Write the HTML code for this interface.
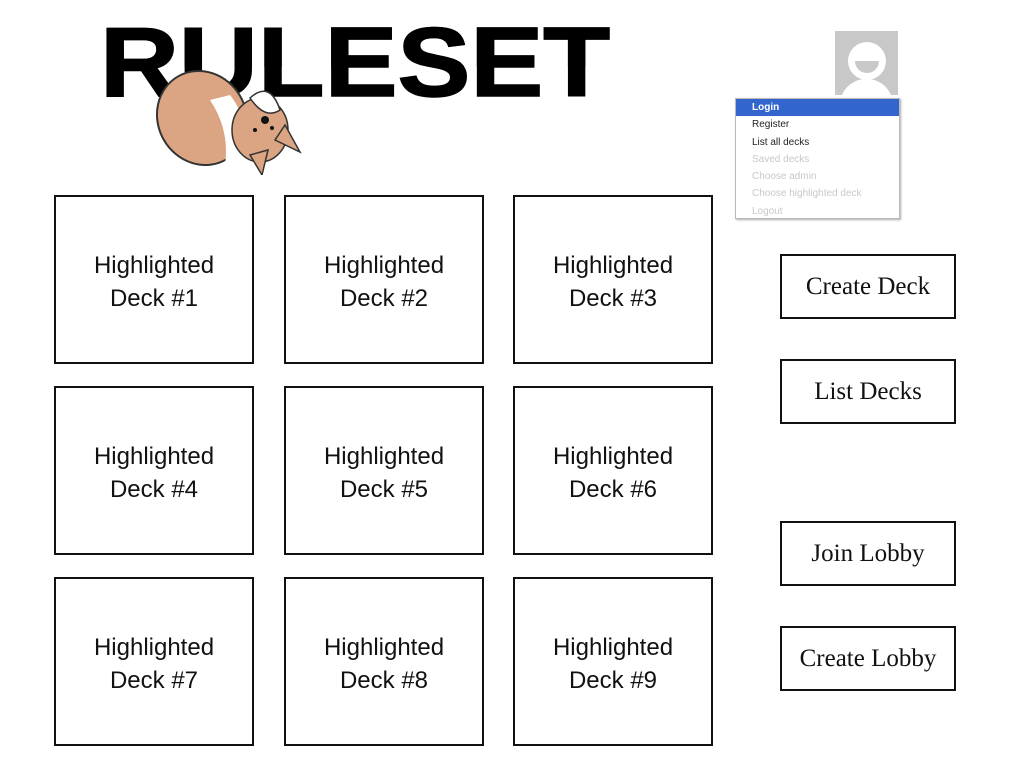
<!DOCTYPE html>
<html><head><style>
body{margin:0;width:1025px;height:770px;background:#fff;position:relative;overflow:hidden;font-family:"Liberation Sans",sans-serif}
.logo{position:absolute;left:100px;top:13px;font-weight:bold;font-size:98px;letter-spacing:0;color:#000;-webkit-text-stroke:1.5px #000;line-height:1;white-space:nowrap;transform:scaleX(1.115);transform-origin:left top}
.card{position:absolute;width:196px;height:161px;padding-top:4px;border:2px solid #111;display:flex;align-items:center;justify-content:center;text-align:center;font-size:24px;line-height:33px;color:#111}
.btn{position:absolute;left:780px;width:172px;height:61px;border:2px solid #111;display:flex;align-items:center;justify-content:center;font-family:"Liberation Serif",serif;font-size:25px;color:#111}
.av{position:absolute;left:835px;top:31px;width:63px;height:64px;background:#c8c8c8;overflow:hidden}
.menu{position:absolute;left:735px;top:98px;width:163px;height:119px;background:#fff;border:1px solid #bbb;box-shadow:1px 1px 2px #aaa;font-size:10px}
.menu div{height:17.3px;line-height:17px;padding-left:16px;color:#222}
.menu .sel{background:#3366cc;color:#fff;font-weight:bold}
.menu .d{color:#c8c8c8}
</style></head><body>
<div class="logo">RULESET</div>
<svg style="position:absolute;left:150px;top:60px" width="160" height="115" viewBox="0 0 160 115">
<ellipse cx="52" cy="58" rx="44" ry="48" transform="rotate(-30 52 58)" fill="#dba583" stroke="#333" stroke-width="2"/>
<path d="M60 40 Q80 70 75 105 L95 100 Q100 60 80 35Z" fill="#fff"/>
<ellipse cx="110" cy="70" rx="28" ry="32" fill="#dba583" stroke="#333" stroke-width="1.5"/>
<path d="M100 38 Q120 20 130 50 Q115 60 100 38Z" fill="#fff" stroke="#333" stroke-width="1.5"/>
<path d="M125 80 L150 92 L135 65Z" fill="#dba583" stroke="#333" stroke-width="1.5"/>
<path d="M100 95 L112 115 L118 90Z" fill="#dba583" stroke="#333" stroke-width="1.5"/>
<circle cx="115" cy="60" r="4" fill="#111"/><circle cx="105" cy="70" r="2" fill="#111"/><circle cx="122" cy="68" r="2" fill="#111"/>
</svg>
<div class="logo" style="clip-path:polygon(0 0,100% 0,100% 55%,0 55%);">RULESET</div>
<div class="av"><div style="position:absolute;left:13px;top:11px;width:38px;height:38px;border-radius:50%;background:#fff"></div><div style="position:absolute;left:20px;top:30px;width:24px;height:12px;border-radius:0 0 12px 12px;background:#c8c8c8"></div><div style="position:absolute;left:5px;top:48px;width:53px;height:40px;border-radius:26px 26px 0 0;background:#fff"></div></div>
<div class="menu"><div class="sel">Login</div><div>Register</div><div>List all decks</div><div class="d">Saved decks</div><div class="d">Choose admin</div><div class="d">Choose highlighted deck</div><div class="d">Logout</div></div>
<div class="card" style="left:54px;top:195px">Highlighted<br>Deck #1</div>
<div class="card" style="left:284px;top:195px">Highlighted<br>Deck #2</div>
<div class="card" style="left:513px;top:195px">Highlighted<br>Deck #3</div>
<div class="card" style="left:54px;top:386px">Highlighted<br>Deck #4</div>
<div class="card" style="left:284px;top:386px">Highlighted<br>Deck #5</div>
<div class="card" style="left:513px;top:386px">Highlighted<br>Deck #6</div>
<div class="card" style="left:54px;top:577px">Highlighted<br>Deck #7</div>
<div class="card" style="left:284px;top:577px">Highlighted<br>Deck #8</div>
<div class="card" style="left:513px;top:577px">Highlighted<br>Deck #9</div>
<div class="btn" style="top:254px">Create Deck</div>
<div class="btn" style="top:359px">List Decks</div>
<div class="btn" style="top:521px">Join Lobby</div>
<div class="btn" style="top:626px">Create Lobby</div>
</body></html>
